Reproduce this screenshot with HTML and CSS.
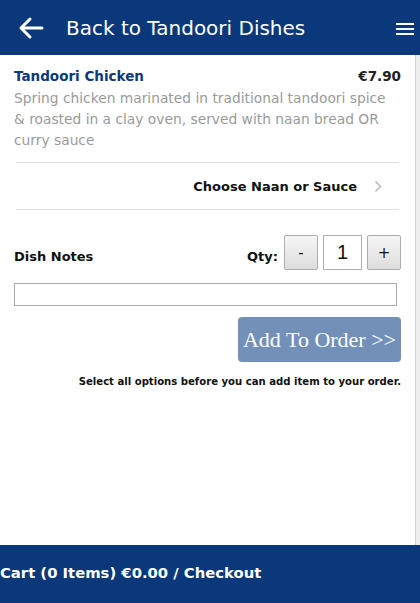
FILE: index.html
```html
<!DOCTYPE html>
<html>
<head>
<meta charset="utf-8">
<link rel="stylesheet" href="styles.css">
</head>
<body>
<div class="page">
  <header class="topbar">
    <svg class="back" width="26" height="24" viewBox="0 0 26 24"><path d="M24 12H3M12 3L3 12l9 9" fill="none" stroke="#fff" stroke-width="3" stroke-linecap="round" stroke-linejoin="round"/></svg>
    <span class="title">Back to Tandoori Dishes</span>
    <svg class="menu" width="18" height="14" viewBox="0 0 18 14"><rect x="0" y="1" width="18" height="2" fill="#fff"/><rect x="0" y="6" width="18" height="2" fill="#fff"/><rect x="0" y="11" width="18" height="2" fill="#fff"/></svg>
  </header>
  <main class="content">
    <div class="item-head">
      <span class="item-name">Tandoori Chicken</span>
      <span class="item-price">€7.90</span>
    </div>
    <p class="item-desc">Spring chicken marinated in traditional tandoori spice<br>&amp; roasted in a clay oven, served with naan bread OR<br>curry sauce</p>
    <div class="option-row">
      <span class="option-label">Choose Naan or Sauce</span>
      <svg class="chev" width="8" height="13" viewBox="0 0 8 13"><path d="M1.5 1.5l5 5-5 5" fill="none" stroke="#bbb" stroke-width="1.6"/></svg>
    </div>
    <div class="notes-row">
      <span class="notes-label">Dish Notes</span>
      <div class="qty">
        <span class="qty-label">Qty:</span>
        <button class="qbtn">-</button>
        <span class="qinput">1</span>
        <button class="qbtn">+</button>
      </div>
    </div>
    <div class="notes-input"></div>
    <div class="add-row"><button class="add-btn">Add To Order &gt;&gt;</button></div>
    <p class="hint">Select all options before you can add item to your order.</p>
  </main>
  <footer class="cart">Cart (0 Items) €0.00 / Checkout</footer>
</div>
</body>
</html>
```
FILE: styles.css
```css
* { box-sizing: border-box; }
html, body { margin: 0; padding: 0; }
body {
  font-family: "DejaVu Sans", sans-serif;
  background: #fff;
  width: 420px;
  height: 603px;
  overflow: hidden;
}
.page {
  display: flex;
  flex-direction: column;
  height: 603px;
}
.topbar {
  height: 55px;
  background: #0a387a;
  display: flex;
  align-items: center;
  padding: 0 6px 0 18px;
  color: #fff;
  flex: none;
}
.back { flex: none; }
.title {
  margin-left: 22px;
  font-size: 20px;
  flex: 1;
}
.menu { flex: none; margin-top: 2px; }
.content {
  flex: 1;
  padding: 13px 15px 0 14px;
  border-right: 4px solid #eee;
  box-shadow: inset -1px 0 0 #d0d0d0;
}
.item-head {
  display: flex;
  justify-content: space-between;
  align-items: baseline;
  font-weight: bold;
  font-size: 13.5px;
}
.item-name { color: #0a387a; }
.item-price { color: #222; }
.item-desc {
  margin: 4px 0 0;
  color: #9a9a9a;
  font-size: 13.8px;
  line-height: 21px;
  white-space: nowrap;
}
.option-row {
  margin: 11px 2px 0 2px;
  border-top: 1px solid #ddd;
  border-bottom: 1px solid #ddd;
  height: 48px;
  display: flex;
  justify-content: flex-end;
  align-items: center;
  padding-right: 17px;
}
.option-label {
  font-weight: bold;
  font-size: 13px;
  color: #111;
  margin-right: 17px;
}
.notes-row {
  margin-top: 25px;
  display: flex;
  justify-content: space-between;
  align-items: center;
}
.notes-label {
  font-weight: bold;
  font-size: 13px;
  color: #111;
  margin-top: 7px;
}
.qty {
  display: flex;
  align-items: center;
  gap: 5px;
}
.qty-label {
  font-weight: bold;
  font-size: 13px;
  color: #111;
  margin-right: 1px;
  margin-top: 7px;
}
.qbtn {
  width: 34px;
  height: 35px;
  border: 1px solid #adadad;
  border-radius: 2px;
  background: linear-gradient(#f6f6f6, #dddddd);
  font-family: "DejaVu Sans", sans-serif;
  font-size: 15px;
  color: #111;
  padding: 0;
}
.qinput {
  width: 39px;
  height: 35px;
  border: 1px solid #adadad;
  display: flex;
  align-items: center;
  justify-content: center;
  font-family: "Liberation Sans", sans-serif;
  font-size: 20px;
  color: #111;
}
.notes-input {
  margin-top: 13px;
  height: 23px;
  border: 1px solid #a9a9a9;
  margin-right: 4px;
}
.add-row {
  display: flex;
  justify-content: flex-end;
  margin-top: 11px;
}
.add-btn {
  width: 163px;
  height: 45px;
  background: #7391b8;
  border: none;
  border-radius: 4px;
  color: #fff;
  font-family: "Liberation Serif", serif;
  font-size: 22px;
  padding: 0;
}
.hint {
  margin: 14px 0 0;
  text-align: right;
  font-weight: bold;
  font-size: 10.1px;
  color: #111;
}
.cart {
  height: 58px;
  flex: none;
  background: #0a387a;
  color: #fff;
  font-weight: bold;
  font-size: 14.8px;
  display: flex;
  align-items: center;
  padding-bottom: 4px;
}
```
